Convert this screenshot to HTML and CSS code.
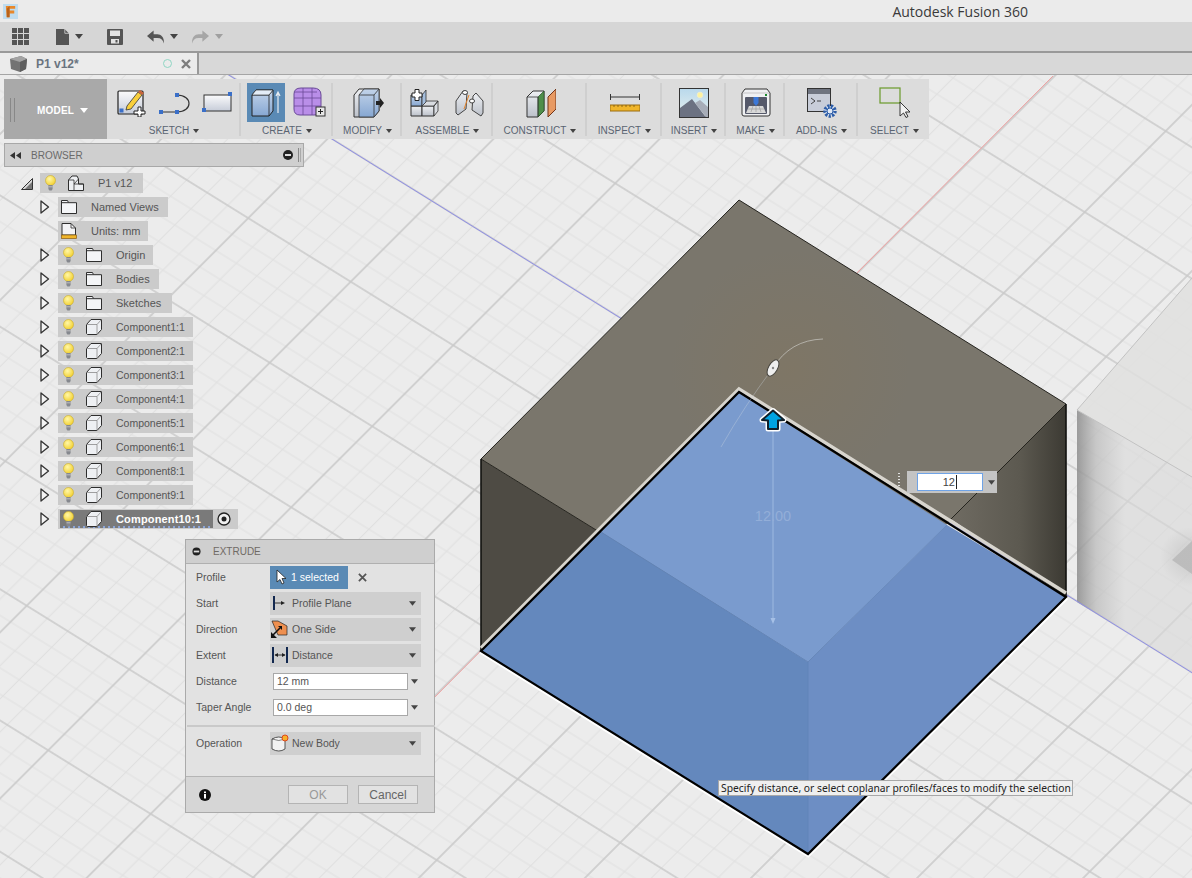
FILE: index.html
```html
<!DOCTYPE html>
<html lang="en">
<head>
<meta charset="utf-8">
<title>Autodesk Fusion 360</title>
<link rel="stylesheet" href="styles.css">
</head>
<body>
<svg class="defs" aria-hidden="true">
  <defs>
    <linearGradient id="paper" x1="0" y1="0" x2="0" y2="1"><stop offset="0" stop-color="#fbfbfc"/><stop offset="1" stop-color="#c6ccd8"/></linearGradient>
    <linearGradient id="blueface" x1="0" y1="0" x2="0" y2="1"><stop offset="0" stop-color="#c3d4ea"/><stop offset="1" stop-color="#86a7d2"/></linearGradient>
    <linearGradient id="greyface" x1="0" y1="0" x2="0" y2="1"><stop offset="0" stop-color="#eef0f3"/><stop offset="1" stop-color="#bcc1ca"/></linearGradient>
    <radialGradient id="bulbglow" cx=".4" cy=".35" r=".7"><stop offset="0" stop-color="#fff7a8"/><stop offset="1" stop-color="#f2cf2c"/></radialGradient>
    <symbol id="bulb" viewBox="0 0 11 16"><circle cx="5.5" cy="5.5" r="5" fill="url(#bulbglow)" stroke="#c9ad33" stroke-width=".6"/><path d="M3.4 10h4.2v4l-1 1.5H4.4l-1-1.5z" fill="#85888e"/><path d="M3.5 11.8h4" stroke="#d5d5d5" stroke-width=".7"/></symbol>
    <symbol id="folder" viewBox="0 0 16 14"><path d="M.5 13.5V.5h6l1 2.2h8v10.800z" fill="#f4f5f7" stroke="#2e2e2e"/><path d="M.5 2.7h7" stroke="#2e2e2e" fill="none"/></symbol>
    <symbol id="comp" viewBox="0 0 16 16"><path d="M.5 5.5 5 .5h10.500v10l-4.500 5H1.500l-1-1z" fill="#eef0f3" stroke="#2e2e2e" stroke-linejoin="round"/><path d="M.5 5.5H11v10M11 5.5l4.500-5" fill="none" stroke="#8a8a8a" stroke-width=".8"/></symbol>
    <symbol id="expand" viewBox="0 0 10 14"><path d="M1 1l7.500 6L1 13z" fill="#f4f4f4" stroke="#333" stroke-width="1.300" stroke-linejoin="round"/></symbol>
    <symbol id="menuarrow" viewBox="0 0 8 5"><path d="M0 0h8L4 5z" fill="#444"/></symbol>
  </defs>
</svg>
<div class="app">
  <header class="titlebar">
    <svg class="app-logo" viewBox="0 0 16 16"><rect width="16" height="16" fill="#bfdcef"/><path d="M3 2h10v3H7v2h5v3H7v4H4z" fill="#e8872a"/><path d="M4 14V5l3-3v12z" fill="#b9621a"/></svg>
    <span class="app-title">Autodesk Fusion 360</span>
  </header>

  <nav class="quickbar">
    <svg class="qb-grid" viewBox="0 0 17 17"><path d="M0 0h5v5H0zM6 0h5v5H6zM12 0h5v5h-5zM0 6h5v5H0zM6 6h5v5H6zM12 6h5v5h-5zM0 12h5v5H0zM6 12h5v5H6zM12 12h5v5h-5z" fill="#555"/></svg>
    <svg class="qb-file" viewBox="0 0 13 16"><path d="M0 0h8.500L13 4.500V16H0z" fill="#555"/><path d="M8.800 0v4.300H13" fill="none" stroke="#d6d6d6" stroke-width=".8"/></svg>
    <span class="caret qb-caret"></span>
    <svg class="qb-save" viewBox="0 0 16 16"><path d="M0 1q0-1 1-1h14q1 0 1 1v14q0 1-1 1H1q-1 0-1-1z" fill="#555"/><rect x="3" y="1.500" width="10" height="5.500" fill="#e4e4e4"/><rect x="4" y="10" width="8" height="4.500" fill="#e4e4e4"/><rect x="8.500" y="11" width="2" height="2.500" fill="#555"/></svg>
    <svg class="qb-undo" viewBox="0 0 18 14"><path d="M7 0v4h4c4 0 7 3 7 9v1c-1-4-3-6-7-6H7v4L0 6z" fill="#555"/></svg>
    <span class="caret qb-caret"></span>
    <svg class="qb-redo" viewBox="0 0 18 14"><path d="M11 0v4H7C3 4 0 7 0 13v1c1-4 3-6 7-6h4v4l7-6z" fill="#a6a6a6"/></svg>
    <span class="caret caret-dim qb-caret"></span>
  </nav>

  <div class="tabstrip">
    <div class="doc-tab">
      <svg class="tab-cube" viewBox="0 0 17 16"><path d="M0 3l11-3 6 3-1 10-6 3-9-3z" fill="#737373"/><path d="M0 3l10 3 7-3-6-3z" fill="#a3a3a3"/><path d="M10 6v10l6-3 1-10z" fill="#5e5e5e"/></svg>
      <span class="tab-name">P1 v12*</span>
      <span class="tab-status"></span>
      <svg class="tab-close" viewBox="0 0 10 10"><path d="M1 1l8 8M9 1L1 9" stroke="#7d7d7d" stroke-width="2.400"/></svg>
    </div>
  </div>

  <main class="viewport">
    <svg class="scene" viewBox="0 75 1192 803">
      <defs>
        <pattern id="grid" width="100" height="100" patternUnits="userSpaceOnUse" patternTransform="matrix(1.025 .636 -.81 .81 431.7 200.7)">
          <path d="M20 0v100M40 0v100M60 0v100M80 0v100M0 20h100M0 40h100M0 60h100M0 80h100" stroke="#e0e0e0" stroke-width=".9" fill="none"/>
          <path d="M0 0v100M100 0v100M0 0h100M0 100h100" stroke="#c9c9c9" stroke-width="1.300" fill="none"/>
        </pattern>
        <linearGradient id="sidefade" gradientUnits="userSpaceOnUse" x1="1077" y1="0" x2="1125" y2="0">
          <stop offset="0" stop-color="#8c8c8c" stop-opacity=".85"/><stop offset=".4" stop-color="#b8b8b8" stop-opacity=".7"/><stop offset="1" stop-color="#d8d8d8" stop-opacity=".6"/>
        </linearGradient>
        <linearGradient id="darkright" gradientUnits="userSpaceOnUse" x1="951" y1="0" x2="1066" y2="0">
          <stop offset="0" stop-color="#6f6b62"/><stop offset=".6" stop-color="#5c5950"/><stop offset="1" stop-color="#3c3a33"/>
        </linearGradient>
        <radialGradient id="tint" gradientUnits="userSpaceOnUse" cx="790" cy="370" r="120">
          <stop offset="0" stop-color="#85765c" stop-opacity=".4"/><stop offset="1" stop-color="#85765c" stop-opacity="0"/>
        </radialGradient>
        <radialGradient id="spot" cx=".5" cy=".5" r=".5"><stop offset=".45" stop-color="#bdbdbd"/><stop offset="1" stop-color="#bdbdbd" stop-opacity="0"/></radialGradient>
      </defs>

      <rect x="0" y="75" width="1192" height="803" fill="#ececec"/>
      <rect x="0" y="75" width="1192" height="803" fill="url(#grid)"/>
      <path d="M1053 76 400 732" stroke="#f0a0a0" stroke-width="1"/>

      <path d="M1077 410 1192 278V477z" fill="#e0e0de" fill-opacity=".8"/>
      <path d="M1077 410 1192 477V673L1077 602z" fill="url(#sidefade)"/>
      <path d="M1077 410 1192 278M1077 410 1192 477" stroke="#c2c2c2" fill="none"/>
      <path d="M1172 560 1192 541V574z" fill="#bcbcbc"/>
      <ellipse cx="1190" cy="557" rx="30" ry="30" fill="url(#spot)" opacity=".35"/>
      <path d="M228 74.500 1192 672.700" stroke="#8f8fe6" stroke-width="1"/>

      <path d="M739 200 1066 404 951 520 808 662 596 530 481 459z" fill="#7a766c"/>
      <path d="M739 200 1066 404 951 520 808 662 596 530 481 459z" fill="url(#tint)"/>
      <path d="M481 459 601 533 481 651z" fill="#4e4b44"/>
      <path d="M1066 404 951 519 1066 597z" fill="url(#darkright)"/>
      <path d="M481 459 739 200 1066 404" fill="none" stroke="#24231e" stroke-width="1"/>
      <path d="M481 459 601 533M1066 404 948 522" fill="none" stroke="#26251f" stroke-width="1"/>
      <path d="M1066 404V597M481 459V651" stroke="#12120f" stroke-width="1.600"/>

      <path d="M481 648 739 389 1066 593" fill="none" stroke="#d8d5ce" stroke-width="3.500"/>
      <path d="M481 651 808 854 1066 597" fill="none" stroke="#fff" stroke-width="6"/>
      <path d="M739 393 947 525 808 662 601 532z" fill="#7a9bce"/>
      <path d="M601 532 808 662V854L481 651z" fill="#6488bd"/>
      <path d="M947 525 1066 597 808 854V662z" fill="#6d8ec4"/>
      <path d="M601 532 808 662 947 525M808 662V854" fill="none" stroke="#5f83b8" stroke-width=".8"/>
      <path d="M739 392 1066 597 808 854 481 651z" fill="none" stroke="#000" stroke-width="2.200"/>

      <path d="M823 339Q790 340 773 368" fill="none" stroke="#d6d6d2" stroke-opacity=".6"/>
      <path d="M773 368Q745 405 721 447" fill="none" stroke="#cfd6e0" stroke-opacity=".35"/>
      <ellipse cx="773" cy="368" rx="4.500" ry="9" transform="rotate(30 773 368)" fill="#eee" stroke="#47453f"/>
      <circle cx="773" cy="368" r="1.200" fill="#888"/>
      <path d="M773 430V622" stroke="#a6c0e6" stroke-opacity=".8"/>
      <path d="M770.500 618 773 624 775.500 618z" fill="#a6c0e6"/>
      <text class="dim-text" x="773" y="521">12.00</text>
      <path d="M773 410.500 784 420 778 420.500V429H768V420.500L762 420z" fill="#00a3e2" stroke="#fff" stroke-width="5" stroke-linejoin="round"/>
      <path d="M773 410.500 784 420 778 420.500V429H768V420.500L762 420z" fill="#00a3e2" stroke="#10202c" stroke-width="2" stroke-linejoin="round"/>
      <path d="M899 473v14" stroke="#dfdfdf" stroke-width="2" stroke-dasharray="1 2"/>
    </svg>

    <section class="toolbar">
      <div class="model-tab"><span class="grip"></span><span class="model-name">MODEL</span><span class="caret caret-white"></span></div>

      <div class="tool-group g-sketch">
        <div class="tool-icons">
          <svg class="ti ti-sk1" viewBox="0 0 29 29"><rect x="1" y="3" width="25" height="23" rx="1" fill="url(#paper)" stroke="#222" stroke-width="1.200"/><path d="M10 18 21 4l4 3-11 14-5 1z" fill="#f8cf3c" stroke="#333" stroke-width=".8"/><path d="M21 4l2-2 4 3-2 2z" fill="#c8643a"/><rect x="2.500" y="20.500" width="4" height="4" fill="#3a6fc8"/><path d="M17 23h4v-4h3v4h4v3h-4v3h-3v-3h-4z" fill="#fff" stroke="#222" stroke-width="1"/></svg>
          <svg class="ti ti-sk2" viewBox="0 0 32 22"><path d="M2 20H18C34 20 34 3 18 3" fill="none" stroke="#333" stroke-width="1.200"/><rect x="0" y="18" width="4" height="4" fill="#3a6fc8"/><rect x="16" y="18" width="4" height="4" fill="#3a6fc8"/><rect x="16" y="1" width="4" height="4" fill="#3a6fc8"/></svg>
          <svg class="ti ti-sk3" viewBox="0 0 31 21"><rect x="2" y="3" width="27" height="16" fill="url(#paper)" stroke="#333"/><rect x="26" y="0" width="4" height="4" fill="#3a6fc8"/><rect x="0" y="16" width="4" height="4" fill="#3a6fc8"/></svg>
        </div>
        <div class="tool-label">SKETCH<span class="caret"></span></div>
      </div>

      <div class="tool-group g-create">
        <div class="tool-icons">
          <div class="tool-active">
            <svg class="ti ti-cr1" viewBox="0 0 30 28"><path d="M1 6l4-5h17v21l-4 5H1z" fill="url(#blueface)" stroke="#222"/><path d="M1 6h17v21M18 6l4-5" fill="none" stroke="#222" stroke-width=".8"/><path d="M5 1h17l-4 5H1z" fill="#e4edf7" stroke="#222" stroke-width=".6"/><path d="M27 24V4M25 7l2-4 2 4" fill="none" stroke="#e9edf2" stroke-width="1.200"/></svg>
          </div>
          <svg class="ti ti-cr2" viewBox="0 0 33 31"><path d="M1 7Q1 1 8 1H20Q28 1 28 8V23Q28 28 21 28H7Q1 28 1 22z" fill="#b98ee8" stroke="#6a4a98"/><path d="M1 11H28M1 19H28M10 1V28M19 1V28M1 5H24" stroke="#6a4a98" stroke-width=".8" fill="none"/><rect x="23" y="20" width="9" height="9" fill="#e8e8e8" stroke="#333"/><path d="M25 24.500h5M27.500 22v5" stroke="#222"/></svg>
        </div>
        <div class="tool-label">CREATE<span class="caret"></span></div>
      </div>

      <div class="tool-group g-modify">
        <div class="tool-icons">
          <svg class="ti ti-mod" viewBox="0 0 31 30"><path d="M1 7 6 1H26V23L21 29H1z" fill="url(#greyface)" stroke="#333"/><path d="M6 7 11 1H26V23L21 29H6z" fill="url(#blueface)" stroke="#333" stroke-width=".8"/><path d="M6 7H21V29M21 7 26 1" fill="none" stroke="#333" stroke-width=".8"/><path d="M23 13h4V10l4 5-4 5v-3h-4z" fill="#222"/></svg>
        </div>
        <div class="tool-label">MODIFY<span class="caret"></span></div>
      </div>

      <div class="tool-group g-assemble">
        <div class="tool-icons">
          <svg class="ti ti-as1" viewBox="0 0 31 29"><path d="M2 18H13V28H2z" fill="url(#greyface)" stroke="#333"/><path d="M13 18H25V28H13z" fill="url(#greyface)" stroke="#333"/><path d="M25 18l4-5v10l-4 5zM13 18l4-5h12l-4 5z" fill="#d9dce1" stroke="#333" stroke-width=".8"/><path d="M2 7H13V18H2z" fill="url(#blueface)" stroke="#333"/><path d="M13 18l4-4V2L13 7z" fill="#a5bedd" stroke="#333" stroke-width=".8"/><path d="M3 5H6V1.500H10V5H13V9H10V12.500H6V9H3z" fill="#fff" stroke="#222"/></svg>
          <svg class="ti ti-as2" viewBox="0 0 29 28"><path d="M1 12 8 2l4 1-1 17-8 6-2-2z" fill="url(#greyface)" stroke="#444"/><path d="M28 12 21 4 18 7l-1 14 9 6 2-3z" fill="url(#greyface)" stroke="#444"/><ellipse cx="10" cy="3.500" rx="2.500" ry="2" fill="#fff" stroke="#444"/><ellipse cx="17" cy="12" rx="2.500" ry="2" fill="#fff" stroke="#444"/><path d="M14 6 9 20" stroke="#e8862d" stroke-width="1"/></svg>
        </div>
        <div class="tool-label">ASSEMBLE<span class="caret"></span></div>
      </div>

      <div class="tool-group g-construct">
        <div class="tool-icons">
          <svg class="ti ti-con" viewBox="0 0 30 30"><path d="M1 9 7 3H18V23L12 29H1z" fill="url(#greyface)" stroke="#333"/><path d="M12 9 18 3V23L12 29H12z" fill="#4f8e4a" stroke="#2a4d28" stroke-width=".7"/><path d="M1 9H12V29" fill="none" stroke="#333" stroke-width=".8"/><path d="M22 9 30 1V21L22 29z" fill="#e89a63" stroke="#733418"/></svg>
        </div>
        <div class="tool-label">CONSTRUCT<span class="caret"></span></div>
      </div>

      <div class="tool-group g-inspect">
        <div class="tool-icons">
          <svg class="ti ti-ins" viewBox="0 0 30 18"><path d="M.5 0V6M29.500 0V6M1 3H29" stroke="#333" fill="none"/><rect x="0" y="11" width="30" height="6" fill="#f0b52a" stroke="#9a6c10"/><path d="M4 11v2M8 11v2M12 11v2M16 11v2M20 11v2M24 11v2" stroke="#7a5810" stroke-width=".8"/></svg>
        </div>
        <div class="tool-label">INSPECT<span class="caret"></span></div>
      </div>

      <div class="tool-group g-insert">
        <div class="tool-icons">
          <svg class="ti ti-ip" viewBox="0 0 30 30"><defs><linearGradient id="sky" x1="0" y1="0" x2="0" y2="1"><stop offset="0" stop-color="#b9d9ec"/><stop offset="1" stop-color="#e8f0ee"/></linearGradient></defs><rect x=".5" y=".5" width="29" height="29" fill="url(#sky)" stroke="#333"/><circle cx="21" cy="7" r="2.800" fill="#fff39c" stroke="#f1eecb"/><path d="M1 29V20L13 11 26 28 29 29z" fill="#6c7282"/><path d="M16 15 21 12 29 19V29H27z" fill="#a7adb8"/></svg>
        </div>
        <div class="tool-label">INSERT<span class="caret"></span></div>
      </div>

      <div class="tool-group g-make">
        <div class="tool-icons">
          <svg class="ti ti-mk" viewBox="0 0 30 29"><path d="M4 1H26L29 5V26Q29 28 27 28H3Q1 28 1 26V5z" fill="#eff0f2" stroke="#333"/><path d="M1 5H29" stroke="#aaa" stroke-width=".6"/><rect x="4" y="9" width="22" height="17" rx="1" fill="#55596a"/><path d="M5 25 8 18H22L25 25z" fill="#d8d8d8"/><path d="M12 18 10 24M15 18V24M18 18 20 24M7 21H23" stroke="#999" stroke-width=".6"/><path d="M12.500 9H17.500V15L15 18 12.500 15z" fill="#3c78d8"/><rect x="24" y="6" width="2" height="2" fill="#1a8a2e"/></svg>
        </div>
        <div class="tool-label">MAKE<span class="caret"></span></div>
      </div>

      <div class="tool-group g-addins">
        <div class="tool-icons">
          <svg class="ti ti-add" viewBox="0 0 30 30"><rect x=".5" y=".5" width="23" height="23" fill="#c8cdd9" stroke="#333"/><rect x="1" y="1" width="22" height="5" fill="#6f7480"/><path d="M4 10 8 13 4 16M10 13H14" fill="none" stroke="#333" stroke-width=".9"/><circle cx="23" cy="23" r="5" fill="#dfe8f5" stroke="#2d5da8" stroke-width="3.500" stroke-dasharray="2.200 1.200"/><circle cx="23" cy="23" r="3" fill="#dfe8f5" stroke="#2d5da8"/></svg>
        </div>
        <div class="tool-label">ADD-INS<span class="caret"></span></div>
      </div>

      <div class="tool-group g-select">
        <div class="tool-icons">
          <svg class="ti ti-sel" viewBox="0 0 31 31"><rect x="1" y="1" width="20" height="15" fill="none" stroke="#6a9a2a" stroke-width="1.200"/><path d="M21 15V29L24.500 26 27 30.500 29 29.500 26.500 25 31 25z" fill="#f2f2f2" stroke="#222" stroke-width=".9" stroke-linejoin="round"/></svg>
        </div>
        <div class="tool-label">SELECT<span class="caret"></span></div>
      </div>
    </section>

    <aside class="browser">
      <div class="browser-head">
        <svg class="bh-rew" viewBox="0 0 11 7"><path d="M5 0v7L0 3.500zM11 0v7L6 3.500z" fill="#333"/></svg>
        <span class="bh-title">BROWSER</span>
        <svg class="bh-min" viewBox="0 0 10 10"><circle cx="5" cy="5" r="5" fill="#222"/><rect x="2" y="4" width="6" height="2" fill="#ddd"/></svg>
        <span class="bh-grip"></span>
      </div>
      <ul class="tree">
        <li class="tree-row root">
          <svg class="root-tri" viewBox="0 0 12 12"><path d="M11.500 .5V11.500H.5z" fill="#d8d8d8" stroke="#333"/><path d="M11 4V11H4z" fill="#777"/></svg>
          <div class="pill root-pill"><svg class="bulb"><use href="#bulb"/></svg><svg class="root-ic" viewBox="0 0 16 16"><path d="M.5 5 4 1H9L10.500 4V9L15.500 9V15.500H.5z" fill="#eef0f3" stroke="#2e2e2e" stroke-linejoin="round"/><path d="M.5 5H6V15.500M6 9H10.500L15.500 9M10.500 4 6 9" fill="none" stroke="#2e2e2e" stroke-width=".8"/></svg><span class="root-text">P1 v12</span></div>
        </li>
        <li class="tree-row"><svg class="exp"><use href="#expand"/></svg><div class="pill plain"><svg class="ic-f"><use href="#folder"/></svg><span>Named Views</span></div></li>
        <li class="tree-row"><span class="exp-none"></span><div class="pill plain p-units"><svg class="ic-u" viewBox="0 0 16 16"><path d="M1 12V.5H10L14.500 5V12z" fill="#f3f3f5" stroke="#2e2e2e"/><path d="M10 .5V5H14.500" fill="none" stroke="#2e2e2e" stroke-width=".8"/><rect x=".5" y="12" width="15" height="3.500" fill="#f0b52a" stroke="#8a5c10" stroke-width=".7"/></svg><span>Units: mm</span></div></li>
        <li class="tree-row"><svg class="exp"><use href="#expand"/></svg><div class="pill"><svg class="bulb"><use href="#bulb"/></svg><svg class="ic-f"><use href="#folder"/></svg><span>Origin</span></div></li>
        <li class="tree-row"><svg class="exp"><use href="#expand"/></svg><div class="pill p-bodies"><svg class="bulb"><use href="#bulb"/></svg><svg class="ic-f"><use href="#folder"/></svg><span>Bodies</span></div></li>
        <li class="tree-row"><svg class="exp"><use href="#expand"/></svg><div class="pill p-sketches"><svg class="bulb"><use href="#bulb"/></svg><svg class="ic-f"><use href="#folder"/></svg><span>Sketches</span></div></li>
        <li class="tree-row"><svg class="exp"><use href="#expand"/></svg><div class="pill"><svg class="bulb"><use href="#bulb"/></svg><svg class="ic-c"><use href="#comp"/></svg><span>Component1:1</span></div></li>
        <li class="tree-row"><svg class="exp"><use href="#expand"/></svg><div class="pill"><svg class="bulb"><use href="#bulb"/></svg><svg class="ic-c"><use href="#comp"/></svg><span>Component2:1</span></div></li>
        <li class="tree-row"><svg class="exp"><use href="#expand"/></svg><div class="pill"><svg class="bulb"><use href="#bulb"/></svg><svg class="ic-c"><use href="#comp"/></svg><span>Component3:1</span></div></li>
        <li class="tree-row"><svg class="exp"><use href="#expand"/></svg><div class="pill"><svg class="bulb"><use href="#bulb"/></svg><svg class="ic-c"><use href="#comp"/></svg><span>Component4:1</span></div></li>
        <li class="tree-row"><svg class="exp"><use href="#expand"/></svg><div class="pill"><svg class="bulb"><use href="#bulb"/></svg><svg class="ic-c"><use href="#comp"/></svg><span>Component5:1</span></div></li>
        <li class="tree-row"><svg class="exp"><use href="#expand"/></svg><div class="pill"><svg class="bulb"><use href="#bulb"/></svg><svg class="ic-c"><use href="#comp"/></svg><span>Component6:1</span></div></li>
        <li class="tree-row"><svg class="exp"><use href="#expand"/></svg><div class="pill"><svg class="bulb"><use href="#bulb"/></svg><svg class="ic-c"><use href="#comp"/></svg><span>Component8:1</span></div></li>
        <li class="tree-row"><svg class="exp"><use href="#expand"/></svg><div class="pill"><svg class="bulb"><use href="#bulb"/></svg><svg class="ic-c"><use href="#comp"/></svg><span>Component9:1</span></div></li>
        <li class="tree-row"><svg class="exp"><use href="#expand"/></svg><div class="pill active-pill"><div class="active-inner"><svg class="bulb"><use href="#bulb"/></svg><svg class="ic-c"><use href="#comp"/></svg><span>Component10:1</span></div><svg class="radio" viewBox="0 0 14 14"><circle cx="7" cy="7" r="6" fill="#f0f0f0" stroke="#222" stroke-width="1.300"/><circle cx="7" cy="7" r="2.500" fill="#222"/></svg></div></li>
      </ul>
    </aside>

    <section class="dialog">
      <div class="dlg-head">
        <svg class="dlg-min" viewBox="0 0 10 10"><circle cx="5" cy="5" r="4.500" fill="#222"/><rect x="2" y="4" width="6" height="2" fill="#ddd"/></svg>
        <span class="dlg-title">EXTRUDE</span>
      </div>
      <div class="dlg-body">
        <div class="form-row">
          <label>Profile</label>
          <div class="sel-wrap">
            <div class="selected"><svg class="sel-cursor" viewBox="0 0 10 16"><path d="M1 1V13L4 10.500 6 15 8 14 6 9.500H10z" fill="#fff" stroke="#222" stroke-width=".8"/></svg><span>1 selected</span></div>
            <svg class="sel-x" viewBox="0 0 10 10"><path d="M1 1l8 8M9 1L1 9" stroke="#555" stroke-width="2"/></svg>
          </div>
        </div>
        <div class="form-row">
          <label>Start</label>
          <div class="dropdown"><svg class="dd-ic" viewBox="0 0 18 18"><path d="M3 2V16" stroke="#12284f" stroke-width="2"/><path d="M4 9H11" stroke="#333"/><path d="M10 7l4 2-4 2z" fill="#222"/></svg><span>Profile Plane</span><svg class="dd-arrow"><use href="#menuarrow"/></svg></div>
        </div>
        <div class="form-row">
          <label>Direction</label>
          <div class="dropdown"><svg class="dd-ic" viewBox="0 0 18 18"><path d="M1 1H7L16 6V15H7z" fill="#ee8f4f" stroke="#222" stroke-width=".7"/><path d="M1 16 9 8" stroke="#111" stroke-width="1.600"/><path d="M0 18V12L6 18zM11 6 7 6 11 10z" fill="#111"/></svg><span>One Side</span><svg class="dd-arrow"><use href="#menuarrow"/></svg></div>
        </div>
        <div class="form-row">
          <label>Extent</label>
          <div class="dropdown"><svg class="dd-ic" viewBox="0 0 18 18"><path d="M2 1V17M16 1V17" stroke="#12284f" stroke-width="2"/><path d="M4 9H14" stroke="#333"/><path d="M7 7 3.500 9 7 11zM11 7l3.500 2L11 11z" fill="#222"/></svg><span>Distance</span><svg class="dd-arrow"><use href="#menuarrow"/></svg></div>
        </div>
        <div class="form-row">
          <label>Distance</label>
          <div class="field-wrap"><input class="field" type="text" value="12 mm"><svg class="dd-arrow field-arrow"><use href="#menuarrow"/></svg></div>
        </div>
        <div class="form-row">
          <label>Taper Angle</label>
          <div class="field-wrap"><input class="field" type="text" value="0.0 deg"><svg class="dd-arrow field-arrow"><use href="#menuarrow"/></svg></div>
        </div>
        <hr class="dlg-rule">
        <div class="form-row">
          <label>Operation</label>
          <div class="dropdown"><svg class="dd-ic" viewBox="0 0 18 18"><path d="M1 5Q8 1 14 5V15Q8 19 1 15z" fill="#f2f2f2" stroke="#333" stroke-width=".8"/><path d="M1 5Q8 8 14 5" fill="none" stroke="#333" stroke-width=".6"/><circle cx="14" cy="4" r="3" fill="#f7b12a" stroke="#e0461c"/></svg><span>New Body</span><svg class="dd-arrow"><use href="#menuarrow"/></svg></div>
        </div>
      </div>
      <div class="dlg-foot">
        <svg class="dlg-info" viewBox="0 0 12 12"><circle cx="6" cy="6" r="6" fill="#111"/><rect x="5" y="5" width="2" height="4.500" fill="#fff"/><rect x="5" y="2.500" width="2" height="1.600" fill="#fff"/></svg>
        <button class="btn btn-off" type="button">OK</button>
        <button class="btn" type="button">Cancel</button>
      </div>
    </section>

    <div class="dim-input"><input class="dim-field" type="text" value="12"><span class="dim-caret"></span><svg class="dd-arrow"><use href="#menuarrow"/></svg></div>
    <div class="tooltip">Specify distance, or select coplanar profiles/faces to modify the selection</div>
  </main>
</div>
</body>
</html>
```

FILE: styles.css
```css
* { box-sizing: border-box; }
html, body { margin: 0; padding: 0; }
body { width: 1192px; height: 878px; overflow: hidden; background: #ececec; font-family: "Liberation Sans", Arial, sans-serif; color: #555; }
svg { display: block; flex: none; }
.defs { position: absolute; width: 0; height: 0; }
.app { display: flex; flex-direction: column; height: 878px; }

.caret { display: inline-block; width: 0; height: 0; border-left: 4px solid transparent; border-right: 4px solid transparent; border-top: 5px solid #444; }
.caret-dim { border-top-color: #a0a0a0; }
.caret-white { border-top-color: #fff; margin-left: 6px; }

.titlebar { height: 22px; flex: none; background: #ebebeb; display: flex; align-items: center; justify-content: space-between; padding: 0 164px 0 3px; }
.app-logo { width: 15px; height: 15px; }
.app-title { font-family: "Open Sans", sans-serif; font-size: 14px; color: #3a3a3a; }

.quickbar { height: 31px; flex: none; background: #d6d6d6; border-bottom: 2px solid #999; display: flex; align-items: center; padding-left: 12px; }
.qb-grid { width: 17px; height: 17px; margin-right: 27px; }
.qb-file { width: 13px; height: 16px; margin-right: 6px; }
.qb-save { width: 16px; height: 16px; margin-left: 24px; margin-right: 24px; }
.qb-undo { width: 17px; height: 14px; margin-right: 6px; }
.qb-redo { width: 17px; height: 14px; margin-left: 14px; margin-right: 6px; }

.tabstrip { height: 22px; flex: none; background: #d8d8d8; border-bottom: 1px solid #a5a5a5; display: flex; }
.doc-tab { width: 199px; background: #ebebeb; border-right: 2px solid #999; display: flex; align-items: center; padding-left: 10px; }
.tab-cube { width: 17px; height: 16px; margin-right: 9px; }
.tab-name { font-size: 12px; font-weight: bold; color: #6a7480; width: 128px; }
.tab-status { width: 9px; height: 9px; border: 1.500px solid #8fd6c4; border-radius: 50%; margin-left: -1px; }
.tab-close { width: 10px; height: 10px; margin-left: 9px; }

.viewport { position: relative; flex: 1; overflow: hidden; }
.scene { position: absolute; left: 0; top: 0; width: 1192px; height: 803px; }
.dim-text { font-size: 14.500px; fill: #93aed8; text-anchor: middle; font-family: "Liberation Sans", sans-serif; }

.toolbar { position: absolute; left: 4px; top: 4px; width: 925px; height: 60px; background: #dcdcdc; display: flex; }
.model-tab { width: 103px; background: #a9a9a9; display: flex; align-items: center; padding: 2px 0 0 6px; color: #fff; font-size: 10px; font-weight: bold; }
.grip { width: 5px; height: 24px; border-left: 1px solid #888; border-right: 1px solid #888; margin-right: 22px; }
.model-name { letter-spacing: .2px; }

.tool-group { display: flex; flex-direction: column; align-items: center; border-right: 2px solid #cfcfcf; margin: 4px 0 3px; height: 53px; }
.g-select { border-right: 0; }
.g-sketch { width: 134px; } .g-create { width: 92px; } .g-modify { width: 69px; } .g-assemble { width: 91px; }
.g-construct { width: 94px; } .g-inspect { width: 75px; } .g-insert { width: 64px; } .g-make { width: 59px; }
.g-addins { width: 73px; } .g-select { width: 71px; }
.tool-icons { height: 39px; flex: none; display: flex; align-items: center; justify-content: center; padding-left: 2px; }
.g-create .tool-icons, .g-assemble .tool-icons { padding-left: 0; }
.tool-label { font-size: 10px; color: #5a6472; display: flex; align-items: center; gap: 4px; line-height: 14px; flex: none; padding-left: 2px; margin-top: 2px; }
.tool-label .caret { border-left-width: 3.500px; border-right-width: 3.500px; border-top-width: 4px; }
.tool-active { width: 38px; height: 39px; background: #5a8ab5; display: flex; align-items: center; justify-content: center; margin-right: 8px; }

.ti-sk1 { width: 29px; height: 29px; margin-left: 2px; margin-right: 13px; }
.ti-sk2 { width: 32px; height: 22px; margin-right: 11px; }
.ti-sk3 { width: 31px; height: 21px; }
.ti-cr1 { width: 30px; height: 28px; }
.ti-cr2 { width: 33px; height: 31px; }
.ti-mod { width: 31px; height: 30px; margin-left: 2px; }
.ti-as1 { width: 31px; height: 29px; margin-right: 15px; }
.ti-as2 { width: 29px; height: 28px; }
.ti-con { width: 30px; height: 30px; margin-left: 2px; }
.ti-ins { width: 30px; height: 18px; }
.ti-ip, .ti-add { width: 30px; height: 30px; }
.ti-mk { width: 30px; height: 29px; }
.ti-sel { width: 31px; height: 31px; }

.browser { position: absolute; left: 4px; top: 68px; width: 300px; }
.browser-head { height: 24px; background: #cfcfcf; border: 1px solid #a8a8a8; display: flex; align-items: center; padding-left: 5px; }
.bh-rew { width: 11px; height: 7px; margin-right: 10px; }
.bh-title { font-size: 10px; color: #6a6a6a; flex: 1; }
.bh-min { width: 10px; height: 10px; margin-right: 5px; }
.bh-grip { width: 3px; height: 14px; border-left: 1px solid #888; border-right: 1px solid #aaa; margin-right: 2px; }

.tree { list-style: none; margin: 6px 0 0; padding: 0; }
.tree-row { height: 24px; display: flex; align-items: flex-start; padding-left: 36px; }
.exp { width: 10px; height: 14px; margin: 3px 8px 0 0; }
.exp-none { width: 10px; margin-right: 8px; }
.root { padding-left: 17px; }
.root-tri { width: 12px; height: 12px; margin: 5px 7px 0 0; }
.pill { height: 20px; background: #cbcbcb; display: flex; align-items: center; padding: 0 8px 0 5px; font-size: 11px; color: #555; }
.bulb { width: 11px; height: 16px; margin-right: 12px; }
.ic-f { width: 16px; height: 14px; margin-right: 14px; }
.ic-c { width: 16px; height: 16px; margin-right: 14px; }
.ic-c + span { font-size: 10.500px; }
.ic-u { width: 16px; height: 16px; margin-right: 14px; }
.plain { padding-left: 3px; padding-right: 9px; }
.p-units { padding-right: 7px; }
.p-bodies { padding-right: 9px; }
.p-sketches { padding-right: 11px; }
.root-pill { padding-right: 11px; }
.root-ic { width: 16px; height: 16px; margin-right: 14px; }
.active-pill { padding: 0 6px 0 2px; width: 180px; }
.active-inner { width: 153px; height: 18px; background: #7a7a7a linear-gradient(90deg, #8ba5d8 50%, transparent 50%) 23px 100% / 5px 2px repeat-x; display: flex; align-items: center; padding-left: 3px; color: #fff; font-weight: bold; }
.active-inner .ic-c + span { font-size: 11px; letter-spacing: .15px; }
.radio { width: 14px; height: 14px; margin-left: 4px; }

.dialog { position: absolute; left: 185px; top: 464px; width: 250px; height: 274px; background: #e2e2e2; border: 1px solid #aaa; display: flex; flex-direction: column; font-size: 10.500px; color: #555; }
.dlg-head { height: 24px; background: #cfcfcf; border-bottom: 1px solid #b0b0b0; display: flex; align-items: center; padding-left: 6px; flex: none; }
.dlg-min { width: 9px; height: 9px; margin-right: 12px; }
.dlg-title { font-size: 10px; color: #6f6a64; }
.dlg-body { flex: 1; padding: 0 0 0 10px; }
.form-row { height: 26px; display: flex; align-items: center; }
.form-row label { width: 74px; flex: none; }
.sel-wrap { display: flex; align-items: center; }
.selected { width: 78px; height: 23px; background: #5a8ab5; color: #fff; display: flex; align-items: center; padding-left: 6px; gap: 5px; }
.sel-cursor { width: 10px; height: 16px; }
.sel-x { width: 9px; height: 9px; margin-left: 10px; }
.dropdown { width: 151px; height: 23px; background: #cfcfcf; display: flex; align-items: center; padding-left: 1px; }
.dropdown span { flex: 1; padding-left: 3px; }
.dd-ic { width: 18px; height: 18px; }
.dd-arrow { width: 7px; height: 5px; }
.dropdown .dd-arrow { margin-right: 5px; }
.field-wrap { display: flex; align-items: center; padding-left: 3px; }
.field { width: 135px; height: 17px; border: 1px solid #a8a8a8; background: #fff; font: 10.500px "Liberation Sans", sans-serif; color: #555; padding: 0 3px; outline: 0; }
.field-arrow { margin-left: 3px; }
.dlg-rule { height: 2px; border: 0; background: #c9c9c9; margin: 5px 0 3px -9px; width: 248px; }
.dlg-foot { height: 36px; flex: none; background: #d6d6d6; border-top: 1px solid #b5b5b5; display: flex; align-items: center; padding-left: 13px; }
.dlg-info { width: 12px; height: 12px; margin-right: 77px; }
.btn { width: 60px; height: 19px; padding: 0; margin-right: 10px; border: 1px solid #b4b4b4; background: #e2e2e2; color: #666; font: 12px "Liberation Sans", sans-serif; }
.btn-off { color: #999; }

.dim-input { position: absolute; left: 907px; top: 396px; width: 90px; height: 22px; background: #c4c4c4; display: flex; align-items: center; padding-left: 10px; gap: 5px; }
.dim-field { width: 66px; height: 18px; border: 1px solid #6fa3e6; background: #fff; font: 11px "Liberation Sans", sans-serif; color: #444; text-align: right; padding: 0 27px 0 0; outline: 0; }
.dim-caret { position: absolute; left: 49px; top: 4px; width: 1px; height: 14px; background: #222; }
.tooltip { position: absolute; left: 718px; top: 705px; width: 355px; height: 16px; background: #efefef; border: 1px solid #a8a8a8; font: 10.300px/14px "Noto Sans", sans-serif; color: #222; padding-left: 2px; white-space: nowrap; overflow: hidden; }
```
